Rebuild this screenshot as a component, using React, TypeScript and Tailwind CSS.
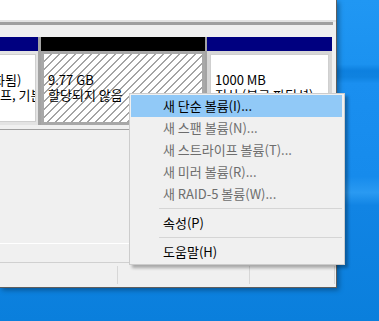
const menuItems: { label: string; disabled?: boolean; active?: boolean; sep?: boolean }[] = [
  { label: "새 단순 볼륨(I)...", active: true },
  { label: "새 스팬 볼륨(N)...", disabled: true },
  { label: "새 스트라이프 볼륨(T)...", disabled: true },
  { label: "새 미러 볼륨(R)...", disabled: true },
  { label: "새 RAID-5 볼륨(W)...", disabled: true },
  { label: "", sep: true },
  { label: "속성(P)" },
  { label: "", sep: true },
  { label: "도움말(H)" },
];

function PartitionText({ lines, top }: { lines: string[]; top: string }) {
  return (
    <div className={`whitespace-nowrap pl-[4px] leading-[15px] ${top}`}>
      {lines.map((line) => (
        <div key={line}>{line}</div>
      ))}
    </div>
  );
}

function Window() {
  return (
    <div className="flex h-[288px] w-[337px] flex-col border-b border-r border-[#5f5f5f] bg-[#f0f0f0] shadow-[2px_2px_5px_rgba(0,0,0,0.35)]">
      <div className="h-[20px] bg-white" />
      <div className="h-[2px] bg-[#e3e3e3]" />
      <div className="mr-[3px] h-[3px] bg-[#a0a0a0]" />
      <div className="h-[12px]" />

      {/* disk row */}
      <div className="flex h-[88px] pr-[4px]">
        <div className="flex w-[38px] flex-col">
          <div className="h-[14px] bg-[#000080]" />
          <div className="flex flex-1 flex-col bg-[#e3e3e3] py-[3px] pr-[2px]">
            <div className="flex-1 overflow-hidden border border-l-0 border-[#cfcfcf] bg-white">
              <div className="whitespace-nowrap pt-[17px] leading-[15px]">
                <div className="-ml-[7px]">화됨)</div>
                <div>프, 기본 데이터 파티션)</div>
              </div>
            </div>
          </div>
        </div>
        <div className="w-[3px] bg-[#a3a3a3]" />
        <div className="flex w-[164px] flex-col">
          <div className="h-[14px] bg-black" />
          <div className="flex flex-1 flex-col bg-[#a8a8a8] p-[3px]">
            <div className="flex-1 overflow-hidden bg-[repeating-linear-gradient(135deg,#ffffff_0px,#ffffff_4.7px,#a4a4a4_4.7px,#a4a4a4_5.66px)]">
              <PartitionText top="pt-[18px]" lines={["9.77 GB", "할당되지 않음"]} />
            </div>
          </div>
        </div>
        <div className="w-[2px] bg-[#a3a3a3]" />
        <div className="flex w-[125px] flex-col">
          <div className="h-[14px] bg-[#000080]" />
          <div className="flex flex-1 flex-col bg-[#d6d6d6] p-[3px]">
            <div className="flex-1 overflow-hidden border border-[#cfcfcf] bg-white">
              <PartitionText top="pt-[17px]" lines={["1000 MB", "정상 (복구 파티션)"]} />
            </div>
          </div>
        </div>
      </div>

      <div className="h-[4px]" />
      <div className="h-px bg-[#a0a0a0]" />
      <div className="flex-1" />
      <div className="h-px bg-white" />
      <div className="h-[18px]" />
      <div className="h-px bg-[#d0d0d0]" />

      {/* status bar */}
      <div className="flex h-[24px]">
        <div className="my-[3px] w-[118px] border-r border-[#d7d7d7]" />
        <div className="my-[3px] w-[132px] border-r border-[#d7d7d7]" />
        <div className="my-[3px] w-[85px] border-r border-[#d7d7d7]" />
      </div>
    </div>
  );
}

function ContextMenu() {
  return (
    <div className="absolute left-[129px] top-[93px] w-[216px] border border-[#cccccc] bg-[#f0f0f0] py-px shadow-[3px_3px_3px_rgba(0,0,0,0.3)]">
      {menuItems.map((item, i) =>
        item.sep ? (
          <div key={i} className="flex h-[7px] items-center pl-[29px] pr-[2px]">
            <div className="h-px w-full bg-[#d5d5d5]" />
          </div>
        ) : (
          <div
            key={i}
            className={`ml-px mr-[2px] flex h-[22px] items-center pl-[32px] ${
              item.active ? "bg-[#91c9f7]" : ""
            } ${item.disabled ? "text-[#6d6d6d]" : "text-black"}`}
          >
            {item.label}
          </div>
        )
      )}
    </div>
  );
}

export default function App() {
  return (
    <div className="relative h-[321px] w-[379px] overflow-hidden bg-[linear-gradient(180deg,#2097f3_0%,#1b92f0_20%,#0d80df_22%,#0f82e0_24%,#1a8ff0_26%,#168bec_55%,#2a9af2_60%,#1184e4_64%,#0a7fdc_100%)] font-['Noto_Sans_CJK_KR',sans-serif] text-[13px] text-black">
      <Window />
      <ContextMenu />
    </div>
  );
}
